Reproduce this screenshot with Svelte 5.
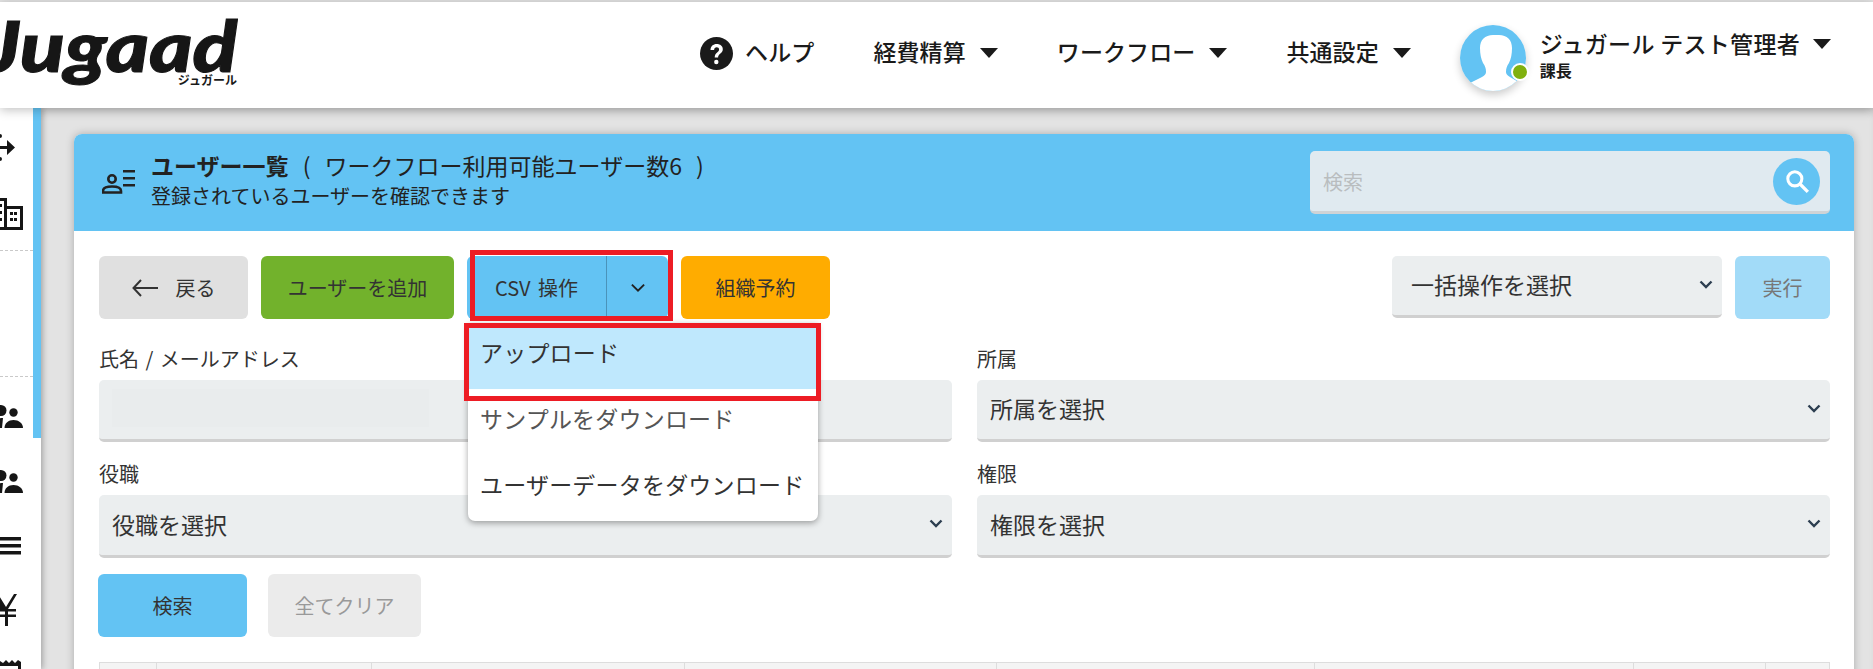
<script lang="ts">
  const columns = [57, 215, 313, 313, 318, 319, 132, 64];

  const formFields = [
    { label: '氏名 / メールアドレス', value: '', kind: 'input' },
    { label: '所属', value: '所属を選択', kind: 'select' },
    { label: '役職', value: '役職を選択', kind: 'select' },
    { label: '権限', value: '権限を選択', kind: 'select' }
  ];

  const navMenus = ['経費精算', 'ワークフロー', '共通設定'];
</script>

{#snippet chevron(cls = '')}
  <svg class="chevron {cls}" viewBox="0 0 14 9" aria-hidden="true">
    <path d="M1.500 1.500L7 7l5.500-5.500" fill="none" stroke="currentColor" stroke-width="2.400" />
  </svg>
{/snippet}

{#snippet caret()}
  <svg class="caret" viewBox="0 0 18 10" width="18" height="10" aria-hidden="true">
    <path d="M0 0h18L9 10z" fill="currentColor" />
  </svg>
{/snippet}

{#snippet people()}
  <svg class="people" viewBox="0 0 33 24" width="33" height="24" aria-hidden="true">
    <circle cx="1" cy="5.500" r="5.500" />
    <path d="M-6 23c0-7 3-10 9-10l-1 10z" />
    <circle cx="13.500" cy="7.500" r="4.200" />
    <path d="M4.500 23c0-5 4-8 9-8s9.500 3 9.500 8z" />
  </svg>
{/snippet}

<div class="page">
  <header class="topbar">
    <div class="logo">
      <span class="logo-word">Jugaad</span>
      <span class="logo-sub">ジュガール</span>
    </div>

    <nav class="nav">
      <span class="help">
        <svg viewBox="0 0 33 33" width="33" height="33" aria-hidden="true">
          <circle cx="16.500" cy="16.500" r="16.500" fill="#1a1a1a" />
          <path d="M10.500 13c0-3.800 2.700-6 6.200-6 3.600 0 6.100 2.200 6.100 5.200 0 4.400-4.700 4.300-4.700 8.300h-3.400c0-5.200 4.400-5.100 4.400-8.100 0-1.200-1-2.100-2.400-2.100-1.500 0-2.500 1-2.600 2.700z" fill="#fff" />
          <circle cx="16.300" cy="25" r="2.200" fill="#fff" />
        </svg>
        <span class="nav-text">ヘルプ</span>
      </span>
      {#each navMenus as menu}
        <span class="nav-item"><span class="nav-text">{menu}</span>{@render caret()}</span>
      {/each}

      <div class="user">
        <div class="avatar">
          <svg viewBox="0 0 66 66" width="66" height="66" aria-hidden="true">
            <clipPath id="avatar-clip"><circle cx="33" cy="33" r="33" /></clipPath>
            <g clip-path="url(#avatar-clip)">
              <rect width="66" height="66" fill="#63c3f3" />
              <path d="M33 10c-8 0-13 5-13 13 0 6 1 11 3 15 2 3 3 5 3 9 0 2-1 3-4 5l-12 6v10h50V58l-10-6c-3-2-4-3-4-5 0-4 1-6 3-9 2-4 3-9 3-15 0-8-5-13-13-13z" fill="#fff" />
            </g>
          </svg>
          <span class="status"></span>
        </div>
        <div class="user-text">
          <div class="user-name">ジュガール テスト管理者{@render caret()}</div>
          <div class="user-role">課長</div>
        </div>
      </div>
    </nav>
  </header>

  <div class="layout">
    <aside class="sidebar">
      <div class="rail">
        <svg class="rail-icon exchange" viewBox="0 0 33 30" width="33" height="30" aria-hidden="true">
          <circle cx="0" cy="2" r="2" />
          <circle cx="0" cy="25" r="2" />
          <path d="M-2 12h9V6l8 7.500-8 7.500v-6h-9z" />
        </svg>
        <svg class="rail-icon building" viewBox="0 0 33 32" width="33" height="32" aria-hidden="true">
          <path d="M-8 0H7v8h16v24H-8zM-2 3v26H4V3zM7 11v18h13V11z" fill-rule="evenodd" />
          <path d="M-1 6h3v3h-3zM-1 13h3v3h-3zM-1 20h3v3h-3zM10 14h3v3h-3zM14 14h3v3h-3zM10 20h3v3h-3zM14 20h3v3h-3z" />
        </svg>
        <div class="rail-divider first"></div>
        <div class="rail-divider second"></div>
        <div class="people-row">{@render people()}</div>
        <div class="people-row next">{@render people()}</div>
        <svg class="rail-icon menu" viewBox="0 0 33 18" width="33" height="18" aria-hidden="true">
          <path d="M0 0h21v3.500H0zM0 7h21v3.500H0zM0 14h21v3.500H0z" />
        </svg>
        <svg class="rail-icon yen" viewBox="0 0 33 32" width="33" height="32" aria-hidden="true">
          <path d="M-2 0l8 13L14 0h3L8 15h8v2.500H8v3h8V23H8v9H5v-9h-8v-2.500h8v-3h-8V15h3z" />
        </svg>
        <svg class="rail-icon receipt" viewBox="0 0 33 12" width="33" height="12" aria-hidden="true">
          <path d="M0 3l3 2 3-3 3 3 3-3 3 3 3-3 3 2v10h-3V8H0z" />
        </svg>
      </div>
      <div class="scrollbar"></div>
    </aside>

    <main class="main">
      <section class="card">
        <div class="card-head">
          <div class="head-title">
            <svg class="head-icon" viewBox="0 0 33 25" width="33" height="25" aria-hidden="true">
              <circle cx="10" cy="10" r="3.700" fill="none" stroke="#222" stroke-width="2.600" />
              <path d="M1 23.500v-1.500c0-3 4-4.500 9-4.500s9 1.500 9 4.500v1.500z" fill="none" stroke="#222" stroke-width="2.600" />
              <path d="M21 1h12v2.600H21zM21 8h12v2.600H21zM21 15h12v2.600H21z" fill="#222" />
            </svg>
            <div>
              <h1><strong>ユーザー一覧</strong> ( ワークフロー利用可能ユーザー数6 )</h1>
              <p>登録されているユーザーを確認できます</p>
            </div>
          </div>
          <div class="head-search">
            <span>検索</span>
            <span class="search-btn">
              <svg viewBox="0 0 24 24" width="26" height="26" aria-hidden="true">
                <circle cx="10" cy="10" r="6.500" fill="none" stroke="#fff" stroke-width="2.800" />
                <path d="M15 15l7 7" stroke="#fff" stroke-width="3" />
              </svg>
            </span>
          </div>
        </div>

        <div class="card-body">
          <div class="toolbar">
            <button class="btn back">
              <svg viewBox="0 0 26 18" width="26" height="18" aria-hidden="true">
                <path d="M9 1L1.500 9 9 17M1.500 9H26" fill="none" stroke="#333" stroke-width="2" />
              </svg>
              <span>戻る</span>
            </button>
            <button class="btn add">ユーザーを追加</button>
            <div class="csv">
              <div class="csv-btn">
                <span class="csv-label">CSV 操作</span>
                <span class="csv-toggle">{@render chevron('thin')}</span>
              </div>
              <div class="red-box csv-box"></div>
              <div class="dropdown">
                <div class="dropdown-item active">アップロード</div>
                <div class="dropdown-item muted">サンプルをダウンロード</div>
                <div class="dropdown-item">ユーザーデータをダウンロード</div>
                <div class="red-box upload-box"></div>
              </div>
            </div>
            <button class="btn reserve">組織予約</button>

            <div class="bulk">
              <div class="field-box select bulk-select">
                <span>一括操作を選択</span>
                {@render chevron()}
              </div>
              <button class="btn run">実行</button>
            </div>
          </div>

          <div class="form-grid">
            {#each formFields as field, i}
              <div class="field" class:lower={i > 1}>
                <div class="field-label">{field.label}</div>
                <div class="field-box {field.kind}">
                  {#if field.kind === 'select'}
                    <span>{field.value}</span>
                    {@render chevron()}
                  {:else}
                    <span class="masked"></span>
                  {/if}
                </div>
              </div>
            {/each}
          </div>

          <div class="actions">
            <button class="btn search">検索</button>
            <button class="btn clear">全てクリア</button>
          </div>

          <div class="table-head">
            {#each columns as col}
              <div class="table-cell" style="width: {col}px"></div>
            {/each}
          </div>
        </div>
      </section>
    </main>
  </div>
</div>

<style>
  :global(body) {
    margin: 0;
    background: #dfdfdf;
  }

  .page {
    width: 1873px;
    height: 669px;
    overflow: hidden;
    display: flex;
    flex-direction: column;
    font-family: "Noto Sans CJK JP", "Noto Sans", sans-serif;
    color: #333;
    background: #e3e3e3;
  }

  .topbar {
    flex: none;
    height: 106px;
    margin-top: 2px;
    background: #fff;
    display: flex;
    justify-content: space-between;
    position: relative;
    z-index: 3;
    box-shadow: 0 2px 10px rgba(0, 0, 0, 0.25);
  }

  .logo {
    width: 238px;
    height: 106px;
    overflow: hidden;
    position: relative;
    text-align: right;
  }

  .logo-word {
    display: inline-block;
    font-family: Lato, sans-serif;
    font-weight: 900;
    font-style: italic;
    font-size: 70px;
    line-height: 70px;
    margin-top: 8px;
    color: #161616;
    white-space: nowrap;
    transform: scaleX(1.18);
    transform-origin: right center;
    -webkit-text-stroke: 1px #161616;
  }

  .logo-sub {
    position: absolute;
    right: 1px;
    top: 70px;
    font-size: 12px;
    line-height: 16px;
    font-weight: 700;
    color: #1a1a1a;
  }

  .nav {
    display: flex;
    align-items: center;
    gap: 59px;
    padding: 0 42px 4px 0;
    color: #1a1a1a;
    font-size: 23px;
    line-height: 30px;
    font-weight: 500;
  }

  .nav-text {
    margin-top: -4px;
    letter-spacing: 0.1px;
  }

  .help {
    display: flex;
    align-items: center;
    gap: 12px;
  }

  .nav-item {
    display: flex;
    align-items: center;
    gap: 14px;
    white-space: nowrap;
  }

  .caret {
    flex: none;
  }

  .user {
    display: flex;
    gap: 14px;
    margin: 10px 0 0 -10px;
  }

  .avatar {
    position: relative;
    width: 66px;
    height: 66px;
    border-radius: 50%;
    box-shadow: 0 4px 8px rgba(0, 0, 0, 0.2);
  }

  .avatar svg {
    display: block;
  }

  .status {
    position: absolute;
    right: -3px;
    top: 38px;
    width: 14px;
    height: 14px;
    background: #7fb00e;
    border: 2px solid #fff;
    border-radius: 50%;
  }

  .user-text {
    padding-top: 2px;
  }

  .user-name {
    display: flex;
    align-items: center;
    gap: 13px;
    white-space: nowrap;
    line-height: 33px;
    letter-spacing: 0.3px;
  }

  .user-role {
    font-size: 16px;
    line-height: 20px;
    font-weight: 700;
  }

  .layout {
    flex: 1;
    min-height: 0;
    display: flex;
  }

  .sidebar {
    flex: none;
    width: 41px;
    display: flex;
    background: #fff;
    position: relative;
    z-index: 2;
    box-shadow: 2px 0 6px rgba(0, 0, 0, 0.25);
  }

  .rail {
    width: 33px;
    display: flex;
    flex-direction: column;
    overflow: hidden;
    color: #161616;
  }

  .rail svg {
    display: block;
    flex: none;
    fill: #161616;
    overflow: visible;
  }

  .exchange {
    margin-top: 26px;
  }

  .building {
    margin-top: 34px;
  }

  .rail-divider {
    flex: none;
    border-top: 1px dashed #c9c9c9;
  }

  .rail-divider.first {
    margin-top: 20px;
  }

  .rail-divider.second {
    margin-top: 125px;
  }

  .people-row {
    margin-top: 28px;
    height: 24px;
    flex: none;
  }

  .people-row.next {
    margin-top: 41px;
  }

  .menu {
    margin-top: 43px;
  }

  .yen {
    margin-top: 39px;
  }

  .receipt {
    margin-top: 32px;
  }

  .scrollbar {
    width: 8px;
    height: 330px;
    background: #63c3f3;
  }

  .main {
    flex: 1;
    min-width: 0;
    padding: 26px 19px 0 33px;
    box-shadow: inset 0 6px 8px -4px rgba(0, 0, 0, 0.12);
  }

  .card {
    background: #fff;
    border-radius: 8px 8px 0 0;
    box-shadow: 0 0 8px rgba(0, 0, 0, 0.25);
  }

  .card-head {
    height: 97px;
    background: #63c3f3;
    border-radius: 8px 8px 0 0;
    display: flex;
    justify-content: space-between;
    align-items: flex-start;
    padding: 0 24px 0 28px;
    box-sizing: border-box;
    color: #222;
  }

  .head-title {
    display: flex;
    align-items: flex-start;
    gap: 16px;
    padding-top: 16px;
  }

  .head-icon {
    margin-top: 19px;
    flex: none;
  }

  h1 {
    margin: 0;
    font-size: 23px;
    line-height: 30px;
    font-weight: 400;
    white-space: nowrap;
    word-spacing: 9px;
  }

  h1 strong {
    font-weight: 700;
  }

  .card-head p {
    margin: 2px 0 0;
    font-size: 20px;
    line-height: 28px;
    white-space: nowrap;
  }

  .head-search {
    width: 520px;
    height: 63px;
    margin-top: 17px;
    box-sizing: border-box;
    background: #e0eaf0;
    border-bottom: 3px solid #cfd3d6;
    border-radius: 5px;
    display: flex;
    align-items: center;
    justify-content: space-between;
    padding: 0 10px 0 13px;
    font-size: 20px;
    color: #b9bdbf;
  }

  .search-btn {
    width: 47px;
    height: 47px;
    border-radius: 50%;
    background: #63c3f3;
    display: flex;
    align-items: center;
    justify-content: center;
  }

  .card-body {
    padding: 25px 24px 0 25px;
  }

  .toolbar {
    display: flex;
    align-items: flex-start;
  }

  .btn {
    height: 63px;
    border: none;
    border-radius: 6px;
    padding: 0;
    font: inherit;
    font-size: 20px;
    color: #333;
    display: flex;
    align-items: center;
    justify-content: center;
  }

  .back {
    width: 149px;
    background: #e0e0e0;
    gap: 18px;
  }

  .add {
    width: 193px;
    margin-left: 13px;
    background: #72b22c;
  }

  .reserve {
    width: 149px;
    margin-left: 13px;
    background: #ffac00;
  }

  .csv {
    position: relative;
    margin-left: 13px;
    width: 201px;
    height: 63px;
  }

  .csv-btn {
    height: 63px;
    display: flex;
    background: #63c3f3;
    border-radius: 6px;
    font-size: 20px;
    line-height: 63px;
  }

  .csv-label {
    width: 140px;
    box-sizing: border-box;
    text-align: center;
    border-right: 1px solid #4a93ba;
    white-space: nowrap;
    word-spacing: 3px;
  }

  .csv-toggle {
    flex: 1;
    display: flex;
    align-items: center;
    justify-content: center;
  }

  .chevron {
    flex: none;
    width: 14px;
    height: 9px;
    color: #2c3e50;
  }

  .chevron.thin {
    width: 16px;
    height: 10px;
    color: #222;
  }

  .chevron.thin path {
    stroke-width: 1.700;
  }

  .red-box {
    position: absolute;
    box-sizing: border-box;
    border: 5px solid #ed1c24;
    z-index: 2;
    pointer-events: none;
  }

  .csv-box {
    left: 3px;
    top: -6px;
    width: 203px;
    height: 71px;
  }

  .dropdown {
    position: absolute;
    left: 1px;
    top: 67px;
    width: 350px;
    background: #fff;
    border-radius: 0 0 7px 7px;
    box-shadow: 0 2px 6px rgba(0, 0, 0, 0.35);
    font-size: 23px;
    line-height: 30px;
    letter-spacing: 0.2px;
    z-index: 1;
  }

  .dropdown-item {
    height: 66px;
    box-sizing: border-box;
    padding: 14px 0 0 12px;
    white-space: nowrap;
  }

  .dropdown-item.active {
    background: #bfe8fd;
  }

  .dropdown-item.muted {
    color: #555;
  }

  .upload-box {
    left: -4px;
    top: 0;
    width: 357px;
    height: 78px;
  }

  .bulk {
    margin-left: auto;
    display: flex;
    gap: 13px;
  }

  .bulk-select {
    width: 330px;
    padding-left: 19px;
  }

  .bulk-select span {
    margin-left: 6px;
  }

  .run {
    width: 95px;
    background: #a2dbf8;
    color: #777;
  }

  .form-grid {
    display: grid;
    grid-template-columns: 853px 853px;
    column-gap: 25px;
    margin-top: 25px;
  }

  .field.lower {
    margin-top: 17px;
  }

  .field-label {
    font-size: 20px;
    line-height: 30px;
    margin-bottom: 6px;
    white-space: nowrap;
    word-spacing: 2px;
  }

  .field-box {
    height: 62px;
    box-sizing: border-box;
    background: #ebeeef;
    border-bottom: 3px solid #d0d0d0;
    border-radius: 5px;
    display: flex;
    align-items: center;
    justify-content: space-between;
    padding: 0 9px 3px 13px;
    font-size: 23px;
    color: #333;
  }

  .field.lower .field-box {
    height: 63px;
  }

  .masked {
    display: block;
    width: 317px;
    height: 38px;
    background: #e9eced;
  }

  .actions {
    display: flex;
    gap: 21px;
    margin: 16px 0 0 -1px;
  }

  .search {
    width: 149px;
    background: #63c3f3;
  }

  .clear {
    width: 153px;
    background: #ebebeb;
    color: #999;
  }

  .table-head {
    display: flex;
    margin-top: 25px;
    height: 60px;
    border-top: 1px solid #ddd;
    border-left: 1px solid #ddd;
    background: #f4f4f4;
  }

  .table-cell {
    border-right: 1px solid #ddd;
    box-sizing: border-box;
  }
</style>
